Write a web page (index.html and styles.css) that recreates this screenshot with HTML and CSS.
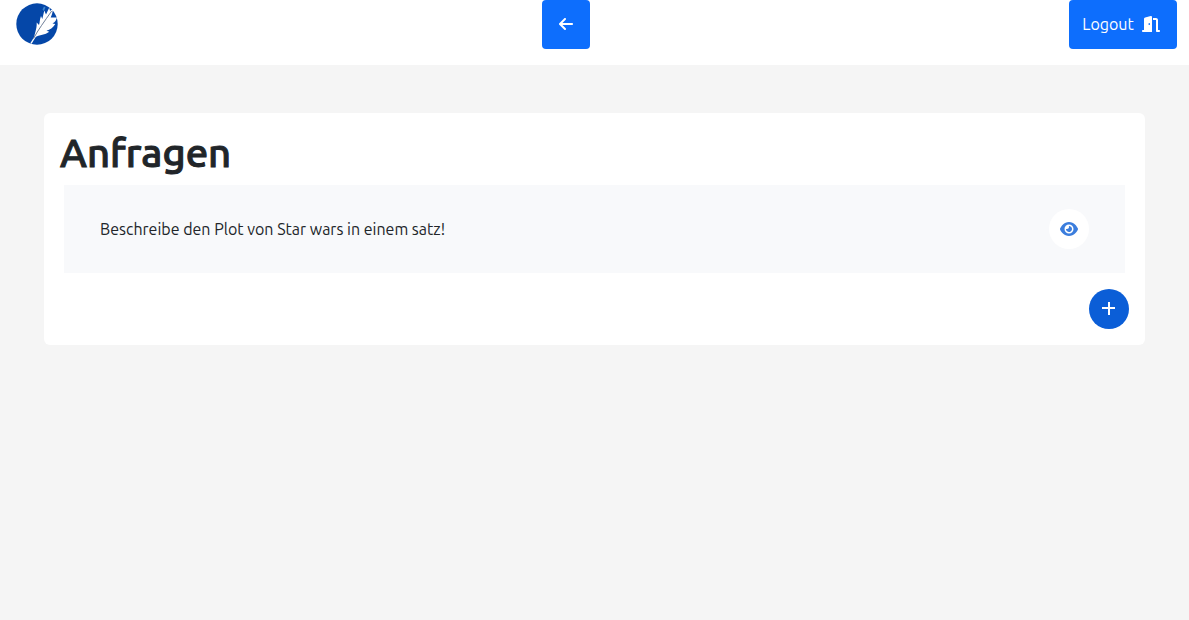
FILE: index.html
```
<!DOCTYPE html>
<html lang="de">
<head>
<meta charset="utf-8">
<meta name="viewport" content="width=device-width, initial-scale=1">
<title>Anfragen</title>
<link rel="stylesheet" href="styles.css">
</head>
<body>
<header class="topbar">
  <a class="logo" href="#" aria-label="Startseite">
    <svg class="logo-mark" viewBox="0 0 42 42" aria-hidden="true">
      <circle cx="21" cy="21" r="20.7" fill="#0547a8"/>
      <path fill="#fff" d="M18.500 34.500C18 31 21 27 20.700 19.500L23 22C24 19 23.500 17 25 13L26.300 16L28.300 7.500L30 11.500L33.300 4.500L34 8L37 5.500C36.500 9 36.500 11 34.700 14.500L41 14.500C40 17 39.500 19 36.500 20.500L39.300 21C37 24.500 34 27 30.500 27.700L33.300 28.700C29 32 24 31.500 18.500 34.500Z"/>
      <path fill="#3f87cc" d="M26.500 6.500L28 3.500L29.500 4.500L27.800 8Z"/>
      <path fill="none" stroke="#fff" stroke-width="1.400" d="M15 40.300L20.500 31.500"/>
      <path fill="none" stroke="#5e6f8c" stroke-width=".9" d="M17.500 35.500C22 27 28 19 35.700 8"/>
    </svg>
  </a>
  <button class="btn" type="button" aria-label="Zurück">
    <svg class="icon icon-arrow" viewBox="0 0 448 512" aria-hidden="true"><path d="M9.400 233.400c-12.500 12.500-12.500 32.800 0 45.300l160 160c12.500 12.500 32.800 12.500 45.300 0s12.500-32.800 0-45.300L109.200 288 416 288c17.700 0 32-14.300 32-32s-14.300-32-32-32l-306.700 0L214.600 118.600c12.500-12.500 12.500-32.800 0-45.300s-32.800-12.500-45.300 0l-160 160z"/></svg>
  </button>
  <button class="btn btn-logout" type="button">Logout
    <svg class="icon icon-wide" viewBox="0 0 576 512" aria-hidden="true"><path d="M320 32c0-9.900-4.500-19.200-12.300-25.200S289.800-1.400 280.200 1l-179.900 45C79 51.300 64 70.500 64 92.500V448H32c-17.700 0-32 14.300-32 32s14.300 32 32 32H96 288h32V480 32zM256 256c0 17.700-10.700 32-24 32s-24-14.300-24-32s10.700-32 24-32s24 14.300 24 32zm96-128h96V480c0 17.700 14.300 32 32 32h64c17.700 0 32-14.300 32-32s-14.300-32-32-32H512V128c0-35.300-28.700-64-64-64H352v64z"/></svg>
  </button>
</header>
<main class="card">
  <h1 class="title">Anfragen</h1>
  <ul class="requests">
    <li class="request">
      <span>Beschreibe den Plot von Star wars in einem satz!</span>
      <button class="round round-view" type="button" aria-label="Anzeigen">
        <svg class="icon icon-wide" viewBox="0 0 576 512" aria-hidden="true"><path d="M288 32c-80.800 0-145.500 36.800-192.600 80.600C48.600 156 17.300 208 2.500 243.700c-3.300 7.900-3.300 16.700 0 24.600C17.300 304 48.600 356 95.400 399.400C142.500 443.200 207.200 480 288 480s145.500-36.800 192.600-80.600c46.800-43.500 78.100-95.400 93-131.100c3.300-7.900 3.300-16.700 0-24.600c-14.900-35.700-46.200-87.700-93-131.100C433.500 68.800 368.800 32 288 32zM144 256a144 144 0 1 1 288 0 144 144 0 1 1 -288 0zm144-64c0 35.300-28.700 64-64 64c-7.100 0-13.900-1.200-20.300-3.300c-5.500-1.800-11.900 1.600-11.700 7.400c.3 6.900 1.300 13.800 3.200 20.700c13.700 51.200 66.400 81.600 117.600 67.900s81.600-66.400 67.900-117.600c-11.100-41.500-47.800-69.400-88.600-71.100c-5.800-.2-9.200 6.100-7.400 11.700c2.100 6.400 3.300 13.200 3.300 20.300z"/></svg>
      </button>
    </li>
  </ul>
  <div class="actions">
    <button class="round round-add" type="button" aria-label="Neue Anfrage">
      <svg class="icon icon-plus" viewBox="0 0 16 16" aria-hidden="true"><path d="M7 1h2v5h5v2H9v6H7V8H1V6h6z"/></svg>
    </button>
  </div>
</main>
</body>
</html>
```
FILE: styles.css
```
* {
  box-sizing: border-box;
}

body {
  margin: 0;
  background: #f5f5f5;
  color: #212529;
  font-family: Ubuntu, "Noto Sans", sans-serif;
  font-size: 16px;
  line-height: 24px;
}

button {
  border: 0;
  font: inherit;
  cursor: pointer;
}

.topbar {
  display: flex;
  justify-content: space-between;
  align-items: flex-start;
  padding: 0 12px 16px;
  background: #fff;
}

.logo {
  display: flex;
  padding: 3px 5px 4px 4px;
}

.logo-mark {
  width: 42px;
  height: 42px;
}

.btn {
  display: flex;
  align-items: center;
  justify-content: center;
  gap: 8px;
  min-width: 48px;
  min-height: 49px;
  padding: 12px 16px 13px;
  border-radius: 4px;
  background: #0d6efd;
  color: #fff;
}

.btn-logout {
  min-width: 108px;
  padding-left: 12px;
}

.icon {
  display: block;
  flex: none;
  height: 16px;
  fill: currentColor;
}

.icon-arrow {
  width: 14px;
}

.icon-wide {
  width: 18px;
}

.icon-plus {
  width: 16px;
}

.card {
  margin: 48px 44px;
  padding: 16px;
  border-radius: 6px;
  background: #fff;
}

.title {
  margin: 0 0 8px;
  font-family: "Ubuntu Medium", Ubuntu, "Noto Sans", sans-serif;
  font-size: 40px;
  font-weight: 500;
  line-height: 48px;
  -webkit-text-stroke: 1px currentColor;
}

.requests {
  margin: 0 4px;
  padding: 0;
  list-style: none;
}

.request {
  display: flex;
  align-items: center;
  justify-content: space-between;
  padding: 24px 36px;
  background: #f8f9fb;
}

.round {
  display: flex;
  flex: none;
  align-items: center;
  justify-content: center;
  width: 40px;
  height: 40px;
  padding: 0;
  border-radius: 50%;
}

.round-view {
  background: #fff;
  color: #3b7ddd;
}

.round-add {
  background: #0b5ed7;
  color: #fff;
}

.actions {
  display: flex;
  justify-content: flex-end;
  padding-top: 16px;
}
```
